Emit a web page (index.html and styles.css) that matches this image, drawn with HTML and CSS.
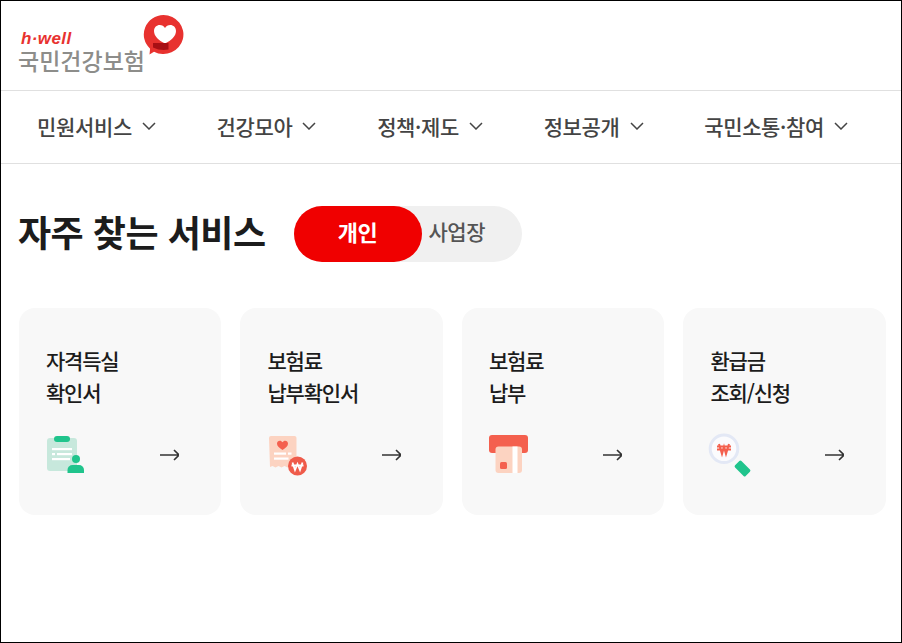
FILE: index.html
```html
<!DOCTYPE html>
<html lang="ko">
<head>
<meta charset="utf-8">
<title>국민건강보험</title>
<link rel="stylesheet" href="styles.css">
</head>
<body>
<div class="frame">
  <header class="header">
    <a class="logo" href="#">
      <span class="logo-text">
        <span class="logo-hwell">h·well</span>
        <span class="logo-name">국민건강보험</span>
      </span>
      <svg class="logo-mark" width="41" height="41" viewBox="0 0 41 41">
        <path d="M20.500 0a20 19.500 0 1 1-9.500 36.700L6.500 39.500l.6-5.800A20 19.500 0 0 1 20.500 0z" fill="#e8322f"/>
        <g transform="translate(1 0)">
          <path d="M21 28.500c-6.500-3-11-7.500-11-12.500 0-3.800 2.800-6 5.700-6 2.300 0 4.200 1.100 5.300 3 1.100-1.900 3-3 5.300-3 2.900 0 5.700 2.200 5.700 6 0 5-4.500 9.500-11 12.500z" fill="#fff"/>
          <path d="M9 28h15.500v6.500c-5 1-10.500.5-15.500-2z" fill="#a80f14"/>
        </g>
      </svg>
    </a>
  </header>
  <nav class="nav">
    <a class="nav-item" href="#">민원서비스<svg class="chev" width="14" height="8" viewBox="0 0 14 8"><path d="M1 1l6 6 6-6"/></svg></a>
    <a class="nav-item" href="#">건강모아<svg class="chev" width="14" height="8" viewBox="0 0 14 8"><path d="M1 1l6 6 6-6"/></svg></a>
    <a class="nav-item" href="#">정책·제도<svg class="chev" width="14" height="8" viewBox="0 0 14 8"><path d="M1 1l6 6 6-6"/></svg></a>
    <a class="nav-item" href="#">정보공개<svg class="chev" width="14" height="8" viewBox="0 0 14 8"><path d="M1 1l6 6 6-6"/></svg></a>
    <a class="nav-item" href="#">국민소통·참여<svg class="chev" width="14" height="8" viewBox="0 0 14 8"><path d="M1 1l6 6 6-6"/></svg></a>
  </nav>
  <main class="main">
    <div class="title-row">
      <h1 class="title">자주 찾는 서비스</h1>
      <div class="toggle">
        <button class="toggle-on">개인</button>
        <button class="toggle-off">사업장</button>
      </div>
    </div>
    <div class="cards">
      <a class="card" href="#">
        <div class="card-title">자격득실<br>확인서</div>
        <div class="card-foot">
          <svg class="icon" width="40" height="40" viewBox="0 0 40 40">
            <rect x="1" y="3" width="30" height="33" rx="3" fill="#c7e8dc"/>
            <rect x="8" y="1" width="16" height="6" rx="3" fill="#20c48c"/>
            <rect x="6" y="13" width="20" height="2.200" fill="#fff"/>
            <rect x="6" y="18" width="3" height="2.200" fill="#fff"/>
            <rect x="11" y="18" width="15" height="2.200" fill="#fff"/>
            <rect x="6" y="23" width="18" height="2.200" fill="#fff"/>
            <circle cx="30" cy="24" r="4" fill="#20c48c"/>
            <path d="M21.500 38v-3a5 5 0 0 1 5-5h6.500a5 5 0 0 1 5 5v3z" fill="#20c48c"/>
          </svg>
          <svg class="arrow" width="20" height="12" viewBox="0 0 20 12"><path d="M1 6h18.500M15 1l5 5-5 5"/></svg>
        </div>
      </a>
      <a class="card" href="#">
        <div class="card-title">보험료<br>납부확인서</div>
        <div class="card-foot">
          <svg class="icon" width="40" height="40" viewBox="0 0 40 40">
            <path d="M2 3a2 2 0 0 1 2-2h23.500a2 2 0 0 1 2 2v28l-3 1.500-3-1.500-3 1.500-3-1.500-3 1.500-3-1.500-3 1.500-3-1.500-2.500 1z" fill="#fcd3c1"/>
            <path d="M15.500 15c-3-2-5.500-4-5.500-6.300 0-1.800 1.300-3 2.800-3 1.100 0 2.100.6 2.700 1.600.6-1 1.600-1.600 2.700-1.600 1.500 0 2.800 1.200 2.800 3 0 2.300-2.500 4.300-5.500 6.300z" fill="#f4604e"/>
            <rect x="7" y="17.500" width="12" height="2.200" fill="#fff"/>
            <rect x="21" y="17.500" width="3.500" height="2.200" fill="#fff"/>
            <rect x="7" y="22.500" width="14.500" height="2.200" fill="#fff"/>
            <circle cx="30.500" cy="31" r="9.500" fill="#ef5b4a"/>
            <path d="M25.500 27.500l2.500 7.500 2.500-6 2.500 6 2.500-7.500M24.500 30.500h12" fill="none" stroke="#fff" stroke-width="1.800"/>
          </svg>
          <svg class="arrow" width="20" height="12" viewBox="0 0 20 12"><path d="M1 6h18.500M15 1l5 5-5 5"/></svg>
        </div>
      </a>
      <a class="card" href="#">
        <div class="card-title">보험료<br>납부</div>
        <div class="card-foot">
          <svg class="icon" width="40" height="40" viewBox="0 0 40 40">
            <rect x="0" y="0" width="39" height="18" rx="3" fill="#f4604e"/>
            <rect x="6.500" y="11.500" width="26.500" height="26.500" rx="3" fill="#fcd3c1"/>
            <rect x="23.500" y="11.500" width="5" height="26.500" fill="#fff"/>
            <rect x="11" y="27" width="7" height="7" rx="1.500" fill="#f4604e"/>
          </svg>
          <svg class="arrow" width="20" height="12" viewBox="0 0 20 12"><path d="M1 6h18.500M15 1l5 5-5 5"/></svg>
        </div>
      </a>
      <a class="card" href="#">
        <div class="card-title">환급금<br>조회/신청</div>
        <div class="card-foot">
          <svg class="icon" width="40" height="40" viewBox="0 0 40 40">
            <circle cx="14" cy="13.700" r="13.800" fill="#fbfbfd" stroke="#e3e8f5" stroke-width="3"/>
            <path d="M7 11.500h14M7 14.500h14M9 9l3 10 2-7 2 7 3-10" fill="none" stroke="#f4604e" stroke-width="2"/>
            <rect x="25" y="29" width="15" height="9" rx="1.500" transform="rotate(45 32.500 33.500)" fill="#20c48c"/>
          </svg>
          <svg class="arrow" width="20" height="12" viewBox="0 0 20 12"><path d="M1 6h18.500M15 1l5 5-5 5"/></svg>
        </div>
      </a>
    </div>
  </main>
</div>
</body>
</html>
```
FILE: styles.css
```css
* { box-sizing: border-box; }
html, body { margin: 0; padding: 0; }
body {
  width: 902px;
  height: 643px;
  overflow: hidden;
  background: #fff;
  font-family: "Noto Sans CJK KR", "Noto Sans", sans-serif;
}
a { color: inherit; text-decoration: none; }
.frame {
  width: 902px;
  height: 643px;
  border: 1px solid #000;
  display: flex;
  flex-direction: column;
}
.header {
  height: 90px;
  border-bottom: 1px solid #e0e0e0;
  padding: 14px 0 0 17px;
}
.logo { display: inline-flex; align-items: flex-start; }
.logo-text { display: flex; flex-direction: column; padding-top: 16px; }
.logo-hwell {
  font-family: "Liberation Sans", sans-serif;
  font-style: italic;
  font-weight: 700;
  font-size: 17px;
  line-height: 16px;
  letter-spacing: 0.400px;
  color: #e8322f;
  padding-left: 3px;
}
.logo-name {
  font-size: 23px;
  line-height: 27px;
  color: #8d8d8a;
  font-weight: 500;
}
.logo-mark { margin-left: -2px; }
.nav {
  height: 73px;
  border-bottom: 1px solid #e0e0e0;
  display: flex;
  align-items: center;
  padding: 0 0 2px 36px;
  gap: 60.700px;
}
.nav-item {
  display: flex;
  align-items: center;
  gap: 10px;
  font-size: 21px;
  font-weight: 500;
  letter-spacing: -0.350px;
  color: #444;
  white-space: nowrap;
}
.chev { fill: none; stroke: #444; stroke-width: 1.500; }
.main { padding: 42px 15px 0 17.900px; }
.title-row { display: flex; align-items: center; gap: 28px; }
.title {
  margin: 0 0 0 -0.900px;
  padding-bottom: 6px;
  font-size: 36px;
  line-height: 50px;
  font-weight: 700;
  color: #1c1c1c;
  letter-spacing: -0.500px;
}
.toggle {
  display: flex;
  width: 228px;
  height: 56px;
  border-radius: 28px;
  background: #f0f0f0;
}
.toggle button {
  border: 0;
  font-family: inherit;
  line-height: 50px;
  letter-spacing: -0.500px;
}
.toggle-on {
  width: 128px;
  padding: 0 0 6px;
  border-radius: 28px;
  background: #f00000;
  color: #fff;
  font-size: 22px;
  font-weight: 700;
}
.toggle-off {
  width: 100px;
  padding: 0 0 6px 7px;
  text-align: left;
  background: none;
  color: #555;
  font-size: 21px;
  font-weight: 500;
}
.cards {
  margin-top: 46px;
  display: grid;
  grid-template-columns: repeat(4, 1fr);
  gap: 19px;
}
.card {
  height: 207px;
  border-radius: 16px;
  background: #f8f8f8;
  padding: 36px 27px 0;
  display: flex;
  flex-direction: column;
}
.card-title {
  font-size: 21px;
  line-height: 32px;
  font-weight: 500;
  letter-spacing: -1.200px;
  color: #1c1c1c;
}
.card-foot {
  margin-top: 27px;
  display: flex;
  justify-content: space-between;
  align-items: center;
  padding-right: 15px;
}
.icon { overflow: visible; }
.arrow { fill: none; stroke: #333; stroke-width: 1.600; }
```
